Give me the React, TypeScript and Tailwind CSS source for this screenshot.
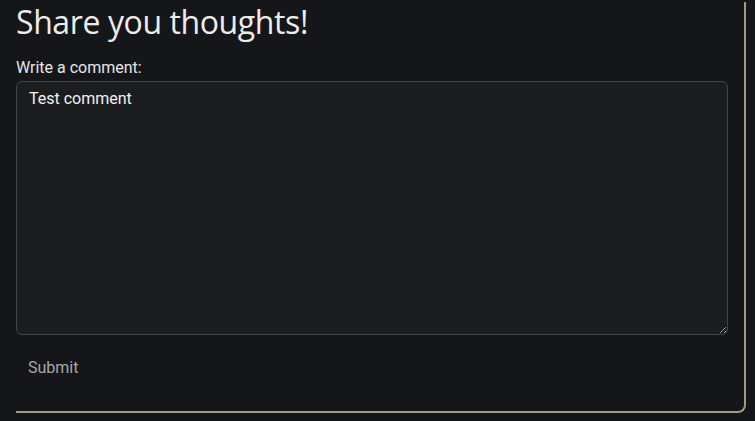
import React from "react";

export default function App() {
  return (
    <div className="w-[755px] h-[421px] overflow-hidden bg-[#151619]" style={{ fontFamily: "Roboto, sans-serif" }}>
      <div className="ml-4 mt-[2px] w-[730px] h-[411px] border-r-2 border-b-2 border-[#a09c80] rounded-br-[8px] pr-4 flex flex-col">
        <h1
          className="-mt-[2px] text-[32px] leading-[44px] text-[#ececec] font-medium tracking-[-0.4px]"
          style={{ fontFamily: "'Open Sans', sans-serif" }}
        >
          Share you thoughts!
        </h1>
        <label className="mt-[12px] text-base leading-6 text-[#e6e6e6]">Write a comment:</label>
        <textarea
          className="mt-[1px] h-[254px] w-full resize-y rounded-[6px] border border-[#434447] bg-[#1c1d1f] px-3 py-[5px] text-base leading-6 text-[#f2f2f2] outline-none"
          defaultValue="Test comment"
        />
        <div className="mt-[15px]">
          <button className="px-3 py-[6px] text-base leading-6 text-[#a8a8a8]">Submit</button>
        </div>
      </div>
    </div>
  );
}
